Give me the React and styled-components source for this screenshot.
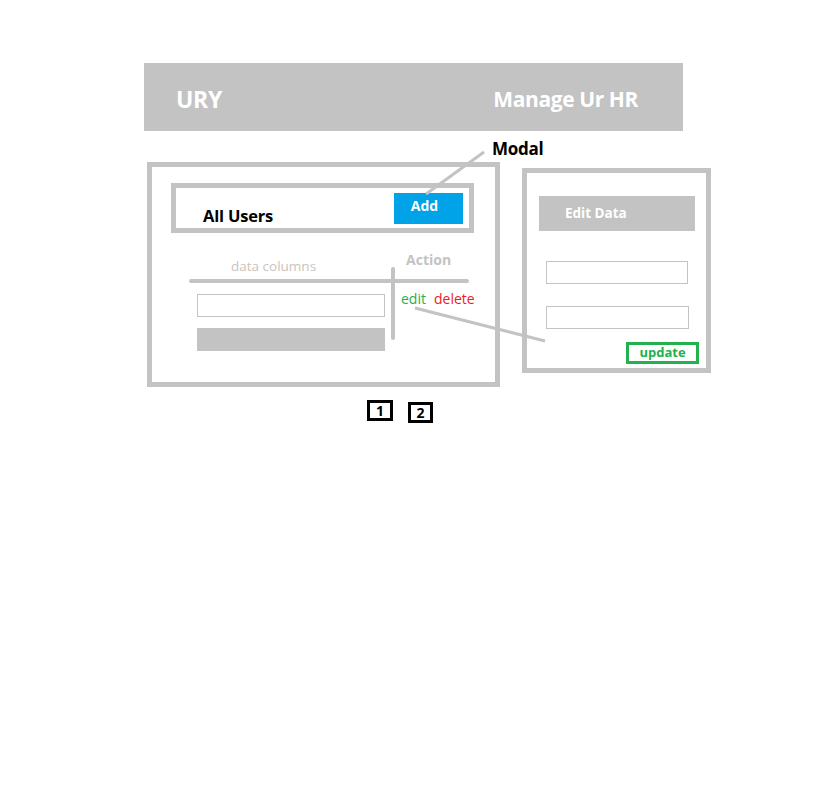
import React from 'react'
import styled, { createGlobalStyle } from 'styled-components'

const GRAY = '#c3c3c3'

const GlobalStyle = createGlobalStyle`
  body {
    margin: 0;
    background: #fff;
    font-family: "Open Sans", "Noto Sans", sans-serif;
  }
`

const Page = styled.div`
  position: relative;
  width: 832px;
  height: 791px;
  padding: 63px 0 0 144px;
  box-sizing: border-box;
`

const Header = styled.header`
  width: 539px;
  height: 68px;
  background: ${GRAY};
  display: flex;
  align-items: center;
  justify-content: space-between;
  padding: 4px 45px 0 32px;
  box-sizing: border-box;
  color: #fff;
  font-weight: 700;
`

const Brand = styled.span`
  font-size: 23px;
  letter-spacing: -0.3px;
`

const Tagline = styled.span`
  font-size: 21px;
  letter-spacing: -0.4px;
`

const Board = styled.div`
  display: flex;
  align-items: flex-start;
  margin-top: 31px;
`

const Panel = styled.section`
  box-sizing: border-box;
  border: 5px solid ${GRAY};
  width: ${({ $w }) => $w}px;
  height: ${({ $h }) => $h}px;
  margin: ${({ $m }) => $m};
`

const TitleBox = styled.div`
  box-sizing: border-box;
  width: 303px;
  height: 50px;
  margin: 16px 0 0 19px;
  border: 5px solid ${GRAY};
  display: flex;
  justify-content: space-between;
  align-items: flex-start;
  padding: 5px 6px 0 27px;
`

const Title = styled.h2`
  margin: 11px 0 0;
  font-size: 16.5px;
  font-weight: 700;
  color: #000;
  letter-spacing: -0.2px;
`

const AddButton = styled.button`
  width: 69px;
  height: 31px;
  border: none;
  background: #00a2e8;
  color: #fff;
  font-family: inherit;
  font-weight: 700;
  font-size: 14px;
  padding: 0 8px 6px 0;
`

const Table = styled.div`
  position: relative;
  width: 280px;
  margin: 24px 0 0 37px;

  &::after {
    content: '';
    position: absolute;
    left: 202px;
    top: 10px;
    width: 4px;
    height: 73px;
    border-radius: 2px;
    background: ${GRAY};
  }
`

const HeadRow = styled.div`
  display: flex;
  align-items: flex-end;
  height: 22px;
`

const ColHead = styled.span`
  font-size: ${({ $bold }) => ($bold ? 14 : 13.5)}px;
  color: ${({ $c }) => $c};
  font-weight: ${({ $bold }) => ($bold ? 700 : 400)};
  margin-left: ${({ $ml }) => $ml}px;
  position: relative;
  top: ${({ $top }) => $top}px;
`

const Rule = styled.div`
  height: 4px;
  border-radius: 2px;
  background: ${GRAY};
`

const BodyRow = styled.div`
  display: flex;
  margin-top: 11px;
`

const DataCol = styled.div`
  display: flex;
  flex-direction: column;
  flex-shrink: 0;
  gap: 11px;
  padding-left: 8px;
  width: 206px;
  box-sizing: border-box;
`

const Field = styled.div`
  box-sizing: border-box;
  width: ${({ $w }) => $w}px;
  height: 23px;
  border: 1px solid ${GRAY};
  background: #fff;
  margin: ${({ $m }) => $m || 0};
`

const Bar = styled.div`
  width: 188px;
  height: 23px;
  background: ${GRAY};
`

const Actions = styled.div`
  display: flex;
  gap: 8px;
  padding-left: 6px;
  margin-top: -5px;
  font-size: 14px;
  white-space: nowrap;
`

const Link = styled.span`
  color: ${({ $c }) => $c};
`

const EditBar = styled.div`
  width: 156px;
  height: 35px;
  margin: 23px 0 0 12px;
  background: ${GRAY};
  color: #fff;
  font-weight: 700;
  font-size: 13.5px;
  display: flex;
  align-items: center;
  padding: 0 0 2px 26px;
  box-sizing: border-box;
`

const UpdateRow = styled.div`
  display: flex;
  justify-content: flex-end;
  margin: 13px 7px 0 0;
`

const UpdateButton = styled.button`
  box-sizing: border-box;
  width: 73px;
  height: 22px;
  border: 3px solid #22b14c;
  background: #fff;
  color: #22b14c;
  font-family: inherit;
  font-weight: 700;
  font-size: 13px;
  padding: 0 0 2px;
  line-height: 1;
`

const Pager = styled.div`
  display: flex;
  align-items: flex-start;
  gap: 15px;
  margin: 13px 0 0 223px;
`

const PageBox = styled.div`
  box-sizing: border-box;
  width: ${({ $w }) => $w}px;
  height: 21px;
  border: 3px solid #000;
  margin-top: ${({ $top }) => $top}px;
  display: flex;
  align-items: center;
  justify-content: center;
  font-weight: 700;
  font-size: 14px;
  line-height: 1;
  color: #000;
`

const Note = styled.span`
  position: absolute;
  left: 492px;
  top: 137px;
  font-size: 17px;
  font-weight: 700;
  color: #000;
  letter-spacing: -0.3px;
`

const Connectors = styled.svg`
  position: absolute;
  left: 0;
  top: 0;
  pointer-events: none;
`

export default function App() {
  return (
    <>
      <GlobalStyle />
      <Page>
        <Header>
          <Brand>URY</Brand>
          <Tagline>Manage Ur HR</Tagline>
        </Header>

        <Board>
          <Panel $w={353} $h={225} $m="0 0 0 3px">
            <TitleBox>
              <Title>All Users</Title>
              <AddButton>Add</AddButton>
            </TitleBox>
            <Table>
              <HeadRow>
                <ColHead $c="#cbc3bd" $ml={42} $top={-4}>data columns</ColHead>
                <ColHead $c={GRAY} $bold $ml={90} $top={-10}>Action</ColHead>
              </HeadRow>
              <Rule />
              <BodyRow>
                <DataCol>
                  <Field $w={188} />
                  <Bar />
                </DataCol>
                <Actions>
                  <Link $c="#22b14c">edit</Link>
                  <Link $c="#ed1c24">delete</Link>
                </Actions>
              </BodyRow>
            </Table>
          </Panel>

          <Panel $w={189} $h={205} $m="6px 0 0 22px">
            <EditBar>Edit Data</EditBar>
            <Field $w={142} $m="30px 0 0 19px" />
            <Field $w={143} $m="22px 0 0 19px" />
            <UpdateRow>
              <UpdateButton>update</UpdateButton>
            </UpdateRow>
          </Panel>
        </Board>

        <Pager>
          <PageBox $w={26} $top={0}>1</PageBox>
          <PageBox $w={25} $top={2}>2</PageBox>
        </Pager>

        <Note>Modal</Note>
        <Connectors width="832" height="791">
          <line x1="484" y1="152" x2="426" y2="194" stroke={GRAY} strokeWidth="3" />
          <line x1="415" y1="308" x2="545" y2="341" stroke={GRAY} strokeWidth="3" />
        </Connectors>
      </Page>
    </>
  )
}
